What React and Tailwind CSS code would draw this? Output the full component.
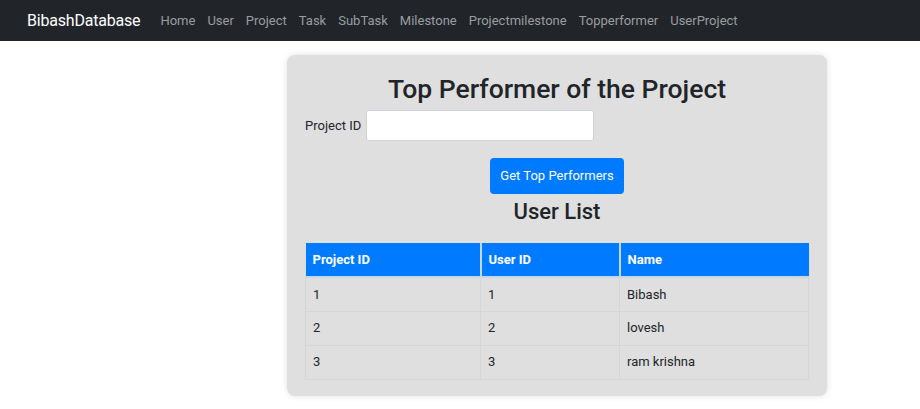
const LINKS = ["Home", "User", "Project", "Task", "SubTask", "Milestone", "Projectmilestone", "Topperformer", "UserProject"];

const ROWS = [
  { projectId: 1, userId: 1, name: "Bibash" },
  { projectId: 2, userId: 2, name: "lovesh" },
  { projectId: 3, userId: 3, name: "ram krishna" },
];

export default function App() {
  return (
    <div className="min-h-[409px] bg-white text-[#212529] font-['Roboto',sans-serif]">
      {/* Navbar */}
      <nav className="h-[41px] bg-[#212529] flex items-center pl-[27px]">
        <span className="text-[16px] tracking-[-0.2px] text-white mr-[20px]">BibashDatabase</span>
        <div className="flex gap-[12px] text-[13px] text-[#9a9da0]">
          {LINKS.map((l) => (
            <span key={l}>{l}</span>
          ))}
        </div>
      </nav>

      {/* Card */}
      <div className="pt-[14px] pl-[287px]">
        <div className="w-[540px] bg-[#dfdfdf] rounded-lg shadow-[0_0_6px_rgba(0,0,0,0.12)] px-[18px] pt-[16px] pb-[16px]">
          <h2 className="text-center text-[26.5px] leading-[36px] font-medium">Top Performer of the Project</h2>
          <div className="flex items-center mt-[3px]">
            <label className="text-[13px] mr-[5px]">Project ID</label>
            <input className="w-[228px] h-[31px] bg-white border border-[#ced4da] rounded-[3px]" />
          </div>
          <div className="flex justify-center mt-[17px]">
            <button className="bg-[#007bff] text-white text-[13px] rounded-[4px] w-[134px] h-[36px]">
              Get Top Performers
            </button>
          </div>
          <h3 className="text-center text-[22px] leading-[34px] font-medium mt-[1px]">User List</h3>
          <table className="w-full mt-[14px] text-[13px] border-collapse">
            <thead>
              <tr className="bg-[#007bff] text-white font-bold h-[34px]">
                <th className="text-left pl-[7px] w-[175px] border-r-2 border-[#c5d6e8] border-b-2">Project ID</th>
                <th className="text-left pl-[7px] w-[139px] border-r-2 border-[#c5d6e8] border-b-2">User ID</th>
                <th className="text-left pl-[7px] border-b-2 border-[#c5d6e8]">Name</th>
              </tr>
            </thead>
            <tbody>
              {ROWS.map((r) => (
                <tr key={r.projectId} className="h-[34px] border-b border-[#d6d6d6]">
                  <td className="pl-[7px] border-x border-[#d6d6d6]">{r.projectId}</td>
                  <td className="pl-[7px] border-r border-[#d6d6d6]">{r.userId}</td>
                  <td className="pl-[7px] border-r border-[#d6d6d6]">{r.name}</td>
                </tr>
              ))}
            </tbody>
          </table>
        </div>
      </div>
    </div>
  );
}
